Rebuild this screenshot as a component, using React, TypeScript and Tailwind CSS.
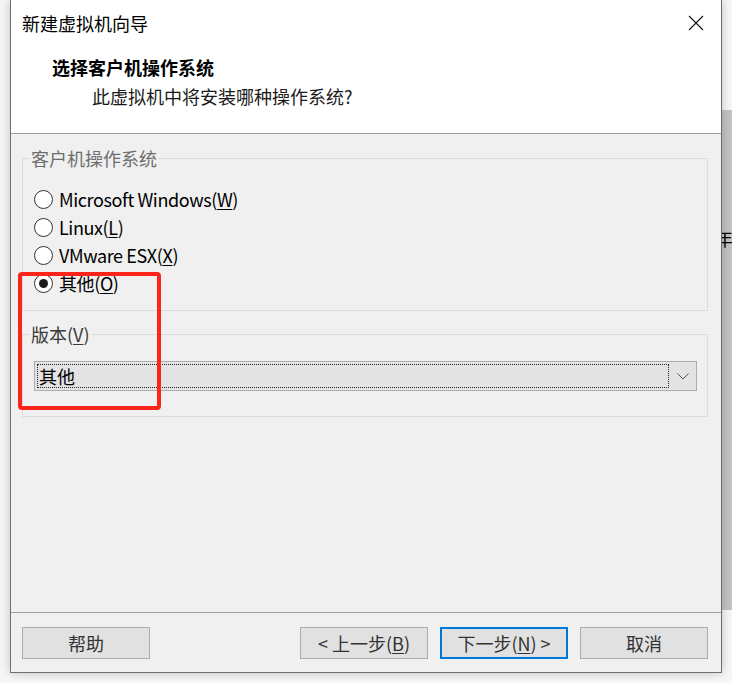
import type { ReactNode } from 'react'

function Radio({ children, checked }: { children: ReactNode; checked?: boolean }) {
  return (
    <div className="flex h-[28px] items-center">
      <span className="ml-[11px] flex h-[19px] w-[19px] items-center justify-center rounded-full border border-[#333333] bg-white">
        {checked && <span className="h-[9px] w-[9px] rounded-full bg-[#1a1a1a]" />}
      </span>
      <span className="ml-[6px] text-[18px] leading-[24px] tracking-[-0.4px] text-black">{children}</span>
    </div>
  )
}

function Button({ children, primary }: { children: ReactNode; primary?: boolean }) {
  return (
    <div
      className={
        primary
          ? 'flex h-[32px] w-[128px] items-center justify-center border-2 border-[#0078d7] bg-[#e1e1e1] text-[18px] leading-[24px] text-[#333333]'
          : 'flex h-[32px] w-[128px] items-center justify-center border border-[#adadad] bg-[#e1e1e1] text-[18px] leading-[24px] text-[#333333]'
      }
    >
      {children}
    </div>
  )
}

export default function App() {
  return (
    <div className="relative h-[683px] w-[732px] overflow-hidden bg-[#f7f7f7] pl-[10px] font-['Noto_Sans_CJK_SC','Noto_Sans',sans-serif]">
      {/* desktop behind the dialog */}
      <div className="absolute left-[722px] top-[110px] h-[500px] w-[10px] bg-[#c4c4c4]" />
      <div className="absolute left-[715px] top-[226px] text-[18px] leading-[24px] text-black">年</div>

      <div className="relative z-10 flex h-[673px] w-[712px] flex-col border-x border-b border-[#6f6f6f] bg-[#f0f0f0] shadow-[0_0_10px_rgba(0,0,0,0.22)]">
        {/* title + header */}
        <div className="h-[133px] bg-white">
          <div className="flex h-[46px] items-center justify-between pl-[11px] pr-[17px]">
            <span className="text-[18px] leading-[24px] text-black">新建虚拟机向导</span>
            <svg width="16" height="16" viewBox="0 0 16 16" fill="none" stroke="#111" strokeWidth="1.1">
              <path d="M1 1 L15 15 M15 1 L1 15" />
            </svg>
          </div>
          <div className="pl-[41px] pt-[9px]">
            <div className="text-[18px] font-bold leading-[24px] text-black">选择客户机操作系统</div>
            <div className="mt-[5px] pl-[40px] text-[18px] leading-[24px] text-[#1a1a1a]">此虚拟机中将安装哪种操作系统?</div>
          </div>
        </div>
        <div className="h-px bg-[#a0a0a0]" />

        {/* body */}
        <div className="flex flex-1 flex-col pl-[11px] pr-[13px] pt-[14px]">
          <fieldset className="border border-[#dcdcdc] pb-[13px]">
            <legend className="ml-[7px] px-[1px] text-[18px] leading-[20px] text-[#6d6d6d]">客户机操作系统</legend>
            <div className="pt-[17px]">
              <Radio>
                Microsoft Windows(<span className="underline underline-offset-2">W</span>)
              </Radio>
              <Radio>
                Linux(<span className="underline underline-offset-2">L</span>)
              </Radio>
              <Radio>
                VMware ESX(<span className="underline underline-offset-2">X</span>)
              </Radio>
              <Radio checked>
                其他(<span className="underline underline-offset-2">O</span>)
              </Radio>
            </div>
          </fieldset>

          <fieldset className="mt-[13px] border border-[#dcdcdc] pb-[25px]">
            <legend className="ml-[7px] px-[1px] text-[18px] leading-[20px] text-[#3a3a3a]">
              版本(<span className="underline underline-offset-2">V</span>)
            </legend>
            <div className="ml-[11px] mr-[10px] mt-[17px] flex h-[30px] items-center border border-[#adadad] bg-[#e3e3e3]">
              <div className="ml-[2px] flex h-[24px] w-[632px] items-center border border-dotted border-[#222222] pl-[1px] text-[18px] leading-[22px] text-black">
                其他
              </div>
              <div className="flex flex-1 items-center justify-center">
                <svg width="12" height="7" viewBox="0 0 12 7" fill="none" stroke="#555" strokeWidth="1">
                  <path d="M0.5 0.5 L6 6 L11.5 0.5" />
                </svg>
              </div>
            </div>
          </fieldset>
        </div>

        {/* footer */}
        <div className="h-px bg-[#a0a0a0]" />
        <div className="flex items-center pb-[13px] pl-[11px] pr-[13px] pt-[14px]">
          <Button>帮助</Button>
          <div className="flex-1" />
          <div className="flex gap-[12px]">
            <Button>
              &lt; 上一步(<span className="underline underline-offset-2">B</span>)
            </Button>
            <Button primary>
              下一步(<span className="underline underline-offset-2">N</span>) &gt;
            </Button>
            <Button>取消</Button>
          </div>
        </div>
      </div>

      {/* red annotation box */}
      <div className="absolute left-[18px] top-[272px] z-20 h-[138px] w-[143px] rounded-[4px] border-4 border-[#fa2418]" />
    </div>
  )
}
